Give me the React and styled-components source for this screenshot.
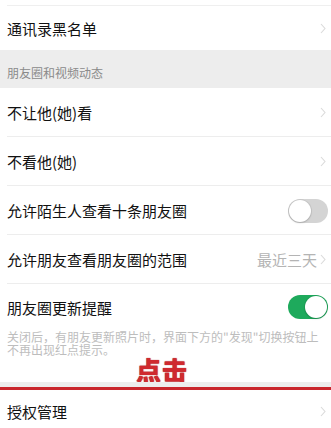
import React from "react";
import styled, { createGlobalStyle } from "styled-components";

const Global = createGlobalStyle`
  html, body { margin: 0; padding: 0; background: #fff; }
  body { font-family: "Noto Sans CJK SC", "Noto Sans", sans-serif; -webkit-font-smoothing: antialiased; }
`;

const Page = styled.div`
  width: 331px;
  height: 428px;
  overflow: hidden;
  background: #fff;
  display: flex;
  flex-direction: column;
`;

const TopEdge = styled.div`
  height: 5px;
  margin-left: 7px;
  border-bottom: 1px solid #efefef;
  flex: none;
`;

const Row = styled.div`
  flex: none;
  height: ${(p) => p.$h || 49}px;
  display: flex;
  align-items: center;
  padding-left: 7px;
  padding-right: ${(p) => (p.$toggle ? 3 : 5)}px;
  position: relative;
  background: #fff;
  box-sizing: border-box;
  &::after {
    content: "";
    display: ${(p) => (p.$line ? "block" : "none")};
    position: absolute;
    left: 7px;
    right: 0;
    bottom: 0;
    border-bottom: 1px solid #ededed;
  }
`;

const Label = styled.span`
  flex: 1;
  font-size: 15px;
  color: #111;
`;

const Value = styled.span`
  font-size: 15px;
  color: #b4b4b4;
  margin-right: 3px;
`;

const SectionHeader = styled.div`
  flex: none;
  height: 38px;
  background: #ededed;
  box-sizing: border-box;
  padding: 15px 0 0 7px;
  font-size: 12px;
  line-height: 16px;
  color: #8a8a8a;
`;

const Switch = styled.div`
  width: 40px;
  height: 24px;
  border-radius: 12px;
  box-sizing: border-box;
  background: ${(p) => (p.$on ? "#1eaa5c" : "#d4d4d4")};
  position: relative;
  flex: none;
`;

const Knob = styled.div`
  position: absolute;
  top: 1px;
  ${(p) => (p.$on ? "right: 1px;" : "left: 1px;")}
  width: 22px;
  height: 22px;
  border-radius: 50%;
  background: #fff;
  box-shadow: 0 0 0 1px rgba(0, 0, 0, 0.06), 0 1px 2px rgba(0, 0, 0, 0.15);
`;

const Footer = styled.div`
  flex: none;
  padding: 0 9px 0 7px;
  display: flex;
  flex-direction: column;
`;

const Tip = styled.div`
  font-size: 12px;
  line-height: 13px;
  color: #bdbdbd;
`;

const Click = styled.div`
  font-size: 25px;
  line-height: 26px;
  height: 26px;
  font-weight: 900;
  color: #cf2a2f;
  padding-left: 129px;
  letter-spacing: 1px;
  text-shadow: 0 0 1px #9a1418;
`;

const GrayBand = styled.div`
  flex: none;
  height: 5px;
  background: #ededed;
`;

const RedLine = styled.div`
  flex: none;
  height: 3px;
  background: #c9262c;
`;

const Chevron = () => (
  <svg width="6" height="11" viewBox="0 0 6 11" style={{ flex: "none" }}>
    <path d="M1 1 L5 5.5 L1 10" fill="none" stroke="#dadada" strokeWidth="1.1" />
  </svg>
);

const Toggle = ({ on }) => (
  <Switch $on={on}>
    <Knob $on={on} />
  </Switch>
);

export default function App() {
  return (
    <Page>
      <Global />
      <TopEdge />
      <Row $h={44}>
        <Label>通讯录黑名单</Label>
        <Chevron />
      </Row>
      <SectionHeader>朋友圈和视频动态</SectionHeader>
      <Row $line>
        <Label>不让他(她)看</Label>
        <Chevron />
      </Row>
      <Row $line>
        <Label>不看他(她)</Label>
        <Chevron />
      </Row>
      <Row $line $toggle>
        <Label>允许陌生人查看十条朋友圈</Label>
        <Toggle on={false} />
      </Row>
      <Row $line>
        <Label>允许朋友查看朋友圈的范围</Label>
        <Value>最近三天</Value>
        <Chevron />
      </Row>
      <Row $h={46} $toggle>
        <Label>朋友圈更新提醒</Label>
        <Toggle on />
      </Row>
      <Footer>
        <Tip>关闭后，有朋友更新照片时，界面下方的"发现"切换按钮上不再出现红点提示。</Tip>
        <Click>点击</Click>
      </Footer>
      <GrayBand />
      <RedLine />
      <Row $h={42}>
        <Label>授权管理</Label>
        <Chevron />
      </Row>
    </Page>
  );
}
